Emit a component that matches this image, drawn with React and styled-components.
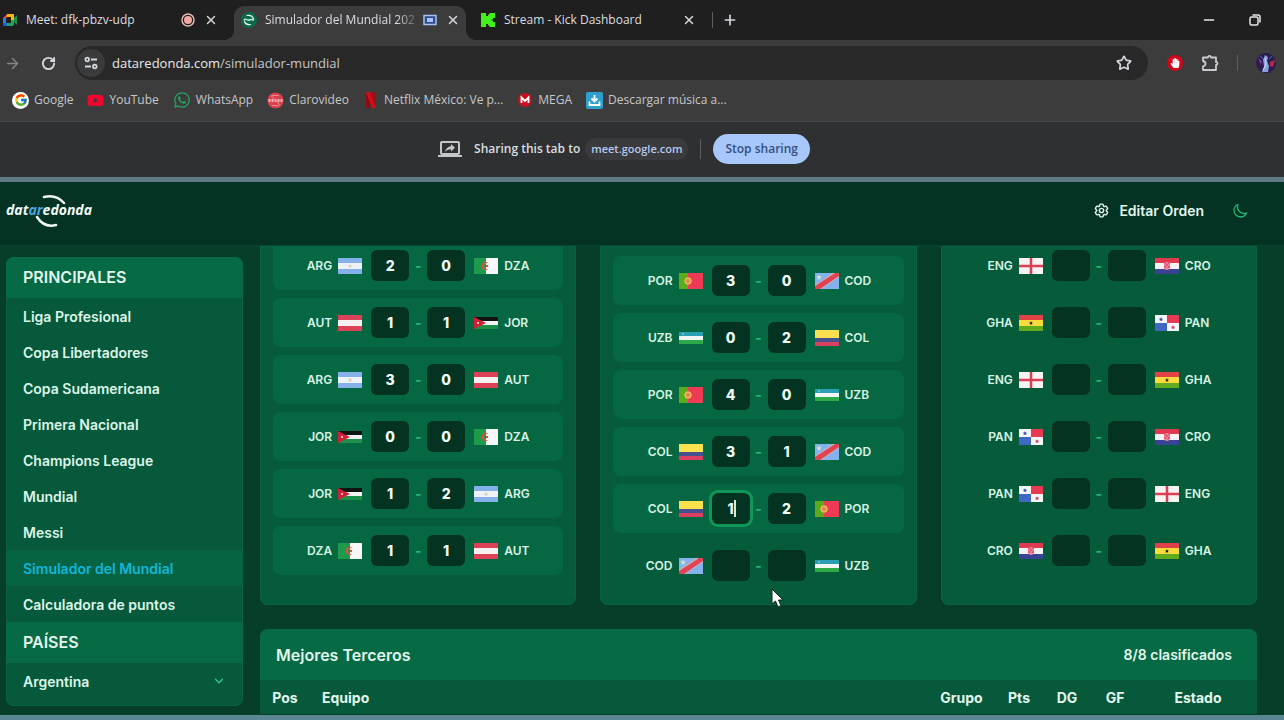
import { useState } from "react";

// Styled Components
import styled, { createGlobalStyle } from "styled-components";

// Icons
import { FcGoogle } from "react-icons/fc";
import { FaWhatsapp, FaYoutube, FaHandPaper } from "react-icons/fa";
import { HiOutlineCog6Tooth, HiOutlineMoon } from "react-icons/hi2";
import { MdOutlineScreenShare } from "react-icons/md";
import {
  ArrowRight,
  ChevronDown,
  Minus,
  Plus,
  RotateCw,
  Star,
  X,
} from "lucide-react";

const menu = [
  "Liga Profesional",
  "Copa Libertadores",
  "Copa Sudamericana",
  "Primera Nacional",
  "Champions League",
  "Mundial",
  "Messi",
  "Simulador del Mundial",
  "Calculadora de puntos",
];

// home, home goals, away goals, away
const groups = [
  {
    id: "J",
    offset: -5,
    matches: [
      ["ARG", "2", "0", "DZA"],
      ["AUT", "1", "1", "JOR"],
      ["ARG", "3", "0", "AUT"],
      ["JOR", "0", "0", "DZA"],
      ["JOR", "1", "2", "ARG"],
      ["DZA", "1", "1", "AUT"],
    ],
  },
  {
    id: "K",
    offset: 10,
    matches: [
      ["POR", "3", "0", "COD"],
      ["UZB", "0", "2", "COL"],
      ["POR", "4", "0", "UZB"],
      ["COL", "3", "1", "COD"],
      ["COL", "1", "2", "POR"],
      ["COD", "", "", "UZB"],
    ],
  },
  {
    id: "L",
    offset: -5,
    matches: [
      ["ENG", "", "", "CRO"],
      ["GHA", "", "", "PAN"],
      ["ENG", "", "", "GHA"],
      ["PAN", "", "", "CRO"],
      ["PAN", "", "", "ENG"],
      ["CRO", "", "", "GHA"],
    ],
  },
];

const flags = {
  ARG: (
    <>
      <rect width="24" height="16" fill="#86b0ea" />
      <rect y="5" width="24" height="6" fill="#eef2f6" />
      <circle cx="12" cy="8" r="1.6" fill="#d8d3b4" />
    </>
  ),
  DZA: (
    <>
      <rect width="12" height="16" fill="#1f9a4c" />
      <rect x="12" width="12" height="16" fill="#f7f7f7" />
      <path
        d="M14.5 5.2A4 4 0 1 0 14.5 10.8A3.2 3.2 0 1 1 14.5 5.2Z"
        fill="#d8523c"
      />
      <circle cx="13" cy="8" r="1.2" fill="#d8523c" />
    </>
  ),
  AUT: (
    <>
      <rect width="24" height="16" fill="#dc4257" />
      <rect y="5" width="24" height="6" fill="#f6f0f0" />
    </>
  ),
  JOR: (
    <>
      <rect y="2" width="24" height="4" fill="#101410" />
      <rect y="6" width="24" height="4" fill="#f2f2f2" />
      <rect y="10" width="24" height="4" fill="#1d8f49" />
      <path d="M0 2L12 8L0 14Z" fill="#cf2036" />
      <circle cx="4" cy="8" r="1" fill="#f2f2f2" />
    </>
  ),
  POR: (
    <>
      <rect width="9" height="16" fill="#5cab1c" />
      <rect x="9" width="15" height="16" fill="#ee3a55" />
      <circle cx="9" cy="8" r="3.2" fill="#e88a5c" stroke="#f3d54a" />
    </>
  ),
  COD: (
    <>
      <rect width="24" height="16" fill="#84b2ec" />
      <path d="M0 16V12L18 0H24V4L6 16Z" fill="#d9b8a8" />
      <path d="M0 16V13L20 0H24V3L5 16Z" fill="#df4355" />
      <path
        d="M4 1.5l.8 1.8 2 .2-1.5 1.3.5 2L4 5.800l-1.800 1 .5-2L1.200 3.500l2-.2z"
        fill="#d6e3c8"
      />
    </>
  ),
  UZB: (
    <>
      <rect y="2" width="24" height="4" fill="#2b9fb4" />
      <rect y="6" width="24" height="4" fill="#f2f6f4" />
      <rect y="10" width="24" height="4" fill="#2cab48" />
      <circle cx="4" cy="4" r="1" fill="#7cc6d2" />
    </>
  ),
  COL: (
    <>
      <rect width="24" height="8" fill="#fbe04f" />
      <rect y="8" width="24" height="4" fill="#46508f" />
      <rect y="12" width="24" height="4" fill="#dc4060" />
    </>
  ),
  ENG: (
    <>
      <rect width="24" height="16" fill="#f6f4f2" />
      <path d="M12 0V16M0 8H24" stroke="#de3d56" strokeWidth="2.500" />
    </>
  ),
  CRO: (
    <>
      <rect width="24" height="5" fill="#e03a50" />
      <rect y="5" width="24" height="6" fill="#f4f1f3" />
      <rect y="11" width="24" height="5" fill="#3a4393" />
      <path d="M9 4H15V9Q15 12 12 12Q9 12 9 9Z" fill="#ee7f92" />
      <path
        d="M9 4h2v2H9zM13 4h2v2h-2zM11 6h2v2h-2zM9 8h2v2H9zM13 8h2v2h-2z"
        fill="#e5576c"
      />
    </>
  ),
  GHA: (
    <>
      <rect width="24" height="5" fill="#e04248" />
      <rect y="5" width="24" height="6" fill="#fadb3c" />
      <rect y="11" width="24" height="5" fill="#62ab1e" />
      <path
        d="M12 6l.6 1.500h1.500l-1.200 1 .4 1.500-1.300-.9-1.300.9.4-1.500-1.200-1h1.500z"
        fill="#1c1c14"
      />
    </>
  ),
  PAN: (
    <>
      <rect width="24" height="16" fill="#f4f5f8" />
      <rect x="12" width="12" height="8" fill="#e83a52" />
      <rect y="8" width="12" height="8" fill="#3f68c4" />
      <path
        d="M6 2.200l.7 1.300 1.400.2-1 1 .2 1.400L6 5.400l-1.300.7.2-1.400-1-1 1.400-.2z"
        fill="#3f4f9c"
      />
      <path
        d="M18 10.200l.7 1.300 1.400.2-1 1 .2 1.400-1.300-.7-1.300.7.2-1.400-1-1 1.400-.2z"
        fill="#d5405a"
      />
    </>
  ),
};

const Flag = ({ code }) => (
  <FlagSvg viewBox="0 0 24 16" aria-hidden="true">
    {flags[code]}
  </FlagSvg>
);

const Match = ({ match, active }) => {
  const [home, homeGoals, awayGoals, away] = match;
  const [score, setScore] = useState([homeGoals, awayGoals]);

  return (
    <MatchRow $played={homeGoals !== ""}>
      <Team $home>
        <span>{home}</span>
        <Flag code={home} />
      </Team>
      <ScoreBox>
        <Score
          aria-label={`Goles ${home}`}
          inputMode="numeric"
          value={score[0]}
          $active={active}
          onChange={(e) => setScore([e.target.value, score[1]])}
        />
        {active && <Caret />}
      </ScoreBox>
      <Dash>-</Dash>
      <ScoreBox>
        <Score
          aria-label={`Goles ${away}`}
          inputMode="numeric"
          value={score[1]}
          onChange={(e) => setScore([score[0], e.target.value])}
        />
      </ScoreBox>
      <Team>
        <Flag code={away} />
        <span>{away}</span>
      </Team>
    </MatchRow>
  );
};

// Browser icons
const MeetIcon = () => (
  <svg width="16" height="16" viewBox="0 0 16 16" aria-hidden="true">
    <path d="M1 6L5 2V6Z" fill="#e8453c" />
    <path d="M5 2H11V5H5Z" fill="#fbbc04" />
    <path d="M1 6H4V11H1Z" fill="#2f7de8" />
    <path d="M1 11H5V14H2Q1 14 1 13Z" fill="#1a67d2" />
    <path d="M5 11H9V14H5Z" fill="#22a85a" />
    <path d="M9 7L12 5V12Q12 14 10 14H8V11H9Z" fill="#22a85a" />
    <path d="M11 2Q12 2 12 3V8H9V5Z" fill="#fbbc04" />
    <path d="M12 6L15 3V13L12 10Z" fill="#15934a" />
  </svg>
);

const RecordIcon = () => (
  <svg width="14" height="14" viewBox="0 0 14 14" aria-hidden="true">
    <circle
      cx="7"
      cy="7"
      r="6"
      fill="none"
      stroke="#e5b9b4"
      strokeWidth="1.500"
    />
    <circle cx="7" cy="7" r="4" fill="#f0a8a2" />
  </svg>
);

const DataIcon = () => (
  <svg width="16" height="16" viewBox="0 0 16 16" aria-hidden="true">
    <circle cx="8" cy="8" r="8" fill="#0b6a4a" />
    <path
      d="M6 3.500Q11 2.500 12.500 7M3.500 9.500Q5 13.500 9.500 12.500"
      fill="none"
      stroke="#e9f6f0"
      strokeWidth="1.200"
      strokeLinecap="round"
    />
    <path
      d="M3 8.500Q4 6.500 5.500 7.500T8 8T10 7.500T13 8"
      fill="none"
      stroke="#c8eadb"
      strokeWidth="1.500"
    />
  </svg>
);

const CastIcon = () => (
  <svg width="14" height="12" viewBox="0 0 14 12" aria-hidden="true">
    <rect
      x="1"
      y="1.500"
      width="12"
      height="9"
      fill="#2f4a86"
      stroke="#a8c0f4"
      strokeWidth="1.500"
    />
    <rect x="4" y="4" width="6" height="4" fill="#a8c0f4" />
  </svg>
);

const KickIcon = () => (
  <svg width="16" height="16" viewBox="-1 -1 16 16" aria-hidden="true">
    <path
      d="M0 0H5V3H7V1.500H8.500V0H14V5H12V6.500H10.500V7.500H12V9H14V14H8.500V12.500H7V11H5V14H0Z"
      fill="#42f01c"
    />
  </svg>
);

const TuneIcon = () => (
  <svg
    width="16"
    height="16"
    viewBox="0 0 16 16"
    fill="none"
    stroke="#d5d7d9"
    strokeWidth="1.800"
    aria-hidden="true"
  >
    <circle cx="4.200" cy="4.500" r="1.800" />
    <path d="M8 4.500H14M2 11.500H8" />
    <circle cx="11.800" cy="11.500" r="1.800" />
  </svg>
);

const PuzzleIcon = () => (
  <svg
    width="18"
    height="18"
    viewBox="0 0 18 18"
    fill="none"
    stroke="#c9cbcd"
    strokeWidth="1.800"
    strokeLinejoin="round"
    aria-hidden="true"
  >
    <path d="M2 3.500H7Q7 1.800 8.500 1.800T10 3.500H15V8Q16.500 8 16.500 9.500T15 11V16H2V12.500Q4.500 12 4.500 9.800T2 7Z" />
  </svg>
);

const RestoreIcon = () => (
  <svg
    width="12"
    height="12"
    viewBox="0 0 12 12"
    fill="none"
    stroke="#e6e6e6"
    strokeWidth="1.500"
    aria-hidden="true"
  >
    <rect x="1" y="3" width="8" height="8" rx="1.500" />
    <path d="M3.500 1H9Q11 1 11 3V8.500" />
  </svg>
);

const AvatarIcon = () => (
  <svg width="20" height="20" viewBox="0 0 20 20" aria-hidden="true">
    <circle cx="10" cy="10" r="10" fill="#2c1c4e" />
    <path d="M2 5L6 8L5 12Z" fill="#7a3ba0" />
    <path d="M14 9L19 7L17 14L14 13Z" fill="#b3284f" />
    <path d="M9 2L12 4L11 8L13 13L12 19H6L8 13L7 7Z" fill="#8aa0dc" />
    <path d="M9 5L10 9L9 14L7 17" fill="none" stroke="#d5dcf6" />
    <path d="M4 3L7 6M13 6L16 3" stroke="#5b63c4" />
  </svg>
);

const ClaroIcon = () => (
  <svg width="17" height="17" viewBox="0 0 17 17" aria-hidden="true">
    <circle cx="8.500" cy="8.500" r="8" fill="#d8404e" />
    <path
      d="M1.500 8.500H15.500"
      stroke="#eeb4ba"
      strokeWidth="3"
      strokeDasharray="2 1"
    />
    <path d="M4 3.500L13 13M5 13.500H12M5 3.500H12" stroke="#ea8a92" />
  </svg>
);

const NetflixIcon = () => (
  <svg width="16" height="16" viewBox="0 0 16 16" aria-hidden="true">
    <rect x="3" width="4" height="16" fill="#8f0a12" />
    <rect x="9" width="4" height="16" fill="#a50b14" />
    <path d="M3 0H7L13 16H9Z" fill="#d40c18" />
  </svg>
);

const MegaIcon = () => (
  <svg width="16" height="16" viewBox="0 0 16 16" aria-hidden="true">
    <circle cx="8" cy="8" r="7" fill="#c90f22" />
    <path
      d="M4.500 11V5.500L8 9L11.500 5.500V11"
      fill="none"
      stroke="#fff"
      strokeWidth="1.800"
    />
  </svg>
);

const DownloadIcon = () => (
  <svg width="17" height="17" viewBox="0 0 17 17" aria-hidden="true">
    <rect width="17" height="17" rx="2" fill="#2f9fce" />
    <path
      d="M8.500 3V9M5.500 6.500L8.500 9.500L11.500 6.500M3.500 9.500V13H13.500V9.500"
      fill="none"
      stroke="#fff"
      strokeWidth="1.800"
    />
  </svg>
);

const GoogleIcon = () => (
  <Badge>
    <FcGoogle size={14} />
  </Badge>
);

const bookmarks = [
  { label: "Google", icon: <GoogleIcon /> },
  { label: "YouTube", icon: <FaYoutube size={17} color="#f0062f" /> },
  { label: "WhatsApp", icon: <FaWhatsapp size={18} color="#24a35a" /> },
  { label: "Clarovideo", icon: <ClaroIcon /> },
  { label: "Netflix México: Ve p...", icon: <NetflixIcon /> },
  { label: "MEGA", icon: <MegaIcon /> },
  { label: "Descargar música a...", icon: <DownloadIcon /> },
];

const CloseTab = () => (
  <IconButton aria-label="Cerrar pestaña">
    <X size={14} strokeWidth={2.5} />
  </IconButton>
);

const Browser = () => (
  <>
    <TabStrip>
      <Tab>
        <MeetIcon />
        <TabTitle>Meet: dfk-pbzv-udp</TabTitle>
        <RecordIcon />
        <CloseTab />
      </Tab>
      <Tab $active>
        <DataIcon />
        <TabTitle $fade>Simulador del Mundial 202</TabTitle>
        <CastIcon />
        <CloseTab />
      </Tab>
      <Tab>
        <KickIcon />
        <TabTitle>Stream - Kick Dashboard</TabTitle>
        <CloseTab />
      </Tab>
      <Separator />
      <NewTab aria-label="Nueva pestaña">
        <Plus size={16} strokeWidth={2.5} />
      </NewTab>
      <WindowControls>
        <button aria-label="Minimizar">
          <Minus size={16} />
        </button>
        <button aria-label="Restaurar">
          <RestoreIcon />
        </button>
      </WindowControls>
    </TabStrip>

    <Toolbar>
      <IconButton aria-label="Adelante" $muted>
        <ArrowRight size={17} />
      </IconButton>
      <IconButton aria-label="Recargar">
        <RotateCw size={15} strokeWidth={3} />
      </IconButton>
      <Omnibox>
        <SiteInfo aria-label="Información del sitio">
          <TuneIcon />
        </SiteInfo>
        <Url>
          <b>dataredonda.com</b>/simulador-mundial
        </Url>
        <IconButton aria-label="Favorito">
          <Star size={16} strokeWidth={2.5} />
        </IconButton>
      </Omnibox>
      <Extensions>
        <AdBlock aria-label="AdBlock">
          <FaHandPaper size={10} />
        </AdBlock>
        <IconButton aria-label="Extensiones">
          <PuzzleIcon />
        </IconButton>
        <Separator />
        <IconButton aria-label="Perfil">
          <AvatarIcon />
        </IconButton>
      </Extensions>
    </Toolbar>

    <Bookmarks>
      {bookmarks.map(({ label, icon }) => (
        <a href="#" key={label}>
          {icon}
          {label}
        </a>
      ))}
    </Bookmarks>

    <ShareBar>
      <MdOutlineScreenShare size={24} />
      <span>Sharing this tab to</span>
      <ShareHost>meet.google.com</ShareHost>
      <ShareDivider />
      <StopButton>Stop sharing</StopButton>
    </ShareBar>
  </>
);

const Logo = () => (
  <svg
    width="90"
    height="34"
    viewBox="0 0 90 34"
    role="img"
    aria-label="dataredonda"
  >
    <path
      d="M38 3Q50 0 58 9"
      fill="none"
      stroke="#eef8f3"
      strokeWidth="2.500"
      strokeLinecap="round"
    />
    <path
      d="M31 23Q38 34 50 31"
      fill="none"
      stroke="#eef8f3"
      strokeWidth="2.500"
      strokeLinecap="round"
    />
    <text
      x="0"
      y="21"
      fontFamily="Open Sans, sans-serif"
      fontSize="14"
      fontWeight="700"
      fontStyle="italic"
      fill="#f2faf6"
    >
      dat<tspan fill="#4aa3df">ar</tspan>edonda
    </text>
  </svg>
);

const App = () => {
  return (
    <Wrapper>
      <GlobalStyle />
      <Browser />

      <Frame>
        <Header>
          <a href="#" aria-label="Inicio">
            <Logo />
          </a>
          <HeaderActions>
            <HeaderButton>
              <HiOutlineCog6Tooth size={17} strokeWidth={2} />
              Editar Orden
            </HeaderButton>
            <HeaderButton aria-label="Modo oscuro" $green>
              <HiOutlineMoon size={16} strokeWidth={2} />
            </HeaderButton>
          </HeaderActions>
        </Header>

        <Content>
          <Sidebar>
            <h2>PRINCIPALES</h2>
            {menu.map((item) => (
              <MenuItem
                href="#"
                key={item}
                $active={item === "Simulador del Mundial"}
              >
                {item}
              </MenuItem>
            ))}
            <h2>PAÍSES</h2>
            <MenuItem as="button">
              Argentina
              <ChevronDown size={14} strokeWidth={2.5} color="#2fc187" />
            </MenuItem>
          </Sidebar>

          <Main>
            <Groups>
              {groups.map(({ id, offset, matches }) => (
                <Group key={id} $offset={offset}>
                  {matches.map((match, i) => (
                    <Match
                      key={i}
                      match={match}
                      active={id === "K" && i === 4}
                    />
                  ))}
                </Group>
              ))}
            </Groups>

            <Thirds>
              <ThirdsHeader>
                <h2>Mejores Terceros</h2>
                <span>8/8 clasificados</span>
              </ThirdsHeader>
              <Table>
                <thead>
                  <tr>
                    <Th $width="50px">Pos</Th>
                    <Th $left>Equipo</Th>
                    <Th $width="67px">Grupo</Th>
                    <Th $width="48px">Pts</Th>
                    <Th $width="48px">DG</Th>
                    <Th $width="48px">GF</Th>
                    <Th $width="118px">Estado</Th>
                  </tr>
                </thead>
              </Table>
            </Thirds>
          </Main>
        </Content>
      </Frame>

      <Pointer width="14" height="20" viewBox="0 0 14 20" aria-hidden="true">
        <path
          d="M1 1V16L4.500 13L7 19L10 17.500L7.500 12H12Z"
          fill="#fff"
          stroke="#0a2a1c"
        />
      </Pointer>
    </Wrapper>
  );
};

export default App;

const GlobalStyle = createGlobalStyle`
  * {
    box-sizing: border-box;
  }

  body {
    margin: 0;
    background-color: #063e2a;
  }

  button, input {
    font: inherit;
    color: inherit;
    border: none;
    background: none;
    padding: 0;
    outline: none;
  }

  button {
    cursor: pointer;
  }

  a {
    color: inherit;
    text-decoration: none;
  }

  h2 {
    margin: 0;
  }

  svg {
    display: block;
    flex-shrink: 0;
  }
`;

const Wrapper = styled.div`
  display: flex;
  flex-direction: column;
  height: 100vh;
  overflow: hidden;

  font-family: "Open Sans", "Noto Sans", sans-serif;
  font-size: 12px;
  color: #dcdee0;
`;

const TabStrip = styled.div`
  display: flex;
  align-items: center;
  height: 40px;
  padding-right: 6px;
  margin-left: -5px;
  background-color: #1f1f1f;
  flex-shrink: 0;
`;

const Tab = styled.div`
  position: relative;
  display: flex;
  align-items: center;
  gap: 8px;
  align-self: flex-end;

  width: 232px;
  height: 34px;
  margin-right: 7px;
  padding: 0 8px 6px 7px;
  border-radius: 10px 10px 0 0;
  background-color: ${({ $active }) => ($active ? "#3c3c3c" : "transparent")};

  // curved feet of the selected tab
  &::before,
  &::after {
    content: "";
    display: ${({ $active }) => ($active ? "block" : "none")};
    position: absolute;
    bottom: 0;
    width: 10px;
    height: 10px;
  }

  &::before {
    left: -10px;
    background: radial-gradient(circle at 0 0, transparent 10px, #3c3c3c 10px);
  }

  &::after {
    right: -10px;
    background: radial-gradient(
      circle at 100% 0,
      transparent 10px,
      #3c3c3c 10px
    );
  }
`;

const TabTitle = styled.span`
  flex: 1;
  white-space: nowrap;
  line-height: 18px;
  mask-image: ${({ $fade }) =>
    $fade ? "linear-gradient(to right, #000 88%, transparent 104%)" : "none"};
`;

const IconButton = styled.button`
  display: flex;
  align-items: center;
  justify-content: center;
  min-width: 16px;
  height: 20px;
  color: ${({ $muted }) => ($muted ? "#858789" : "#d5d7d9")};
`;

const NewTab = styled(IconButton)`
  margin-left: 9px;
`;

const Separator = styled.span`
  width: 1px;
  height: 16px;
  background-color: #5c5e60;
`;

const WindowControls = styled.div`
  display: flex;
  margin-left: auto;
  color: #e6e6e6;

  button {
    display: flex;
    align-items: center;
    justify-content: center;
    width: 46px;
    height: 40px;
  }
`;

const Toolbar = styled.div`
  display: flex;
  align-items: center;
  height: 46px;
  padding: 0 8px 0 4px;
  gap: 19px;
  background-color: #3c3c3c;
  flex-shrink: 0;
`;

const Omnibox = styled.div`
  flex: 1;
  display: flex;
  align-items: center;
  gap: 7px;

  height: 34px;
  padding: 0 16px 0 2px;
  border-radius: 17px;
  background-color: #282828;
`;

const SiteInfo = styled.button`
  display: flex;
  align-items: center;
  justify-content: center;
  width: 28px;
  height: 28px;
  border-radius: 50%;
  background-color: #3a3b3b;
`;

const Url = styled.div`
  flex: 1;
  font-size: 13px;
  color: #c4c6c8;

  b {
    font-weight: 400;
    color: #e8eaec;
  }
`;

const Extensions = styled.div`
  display: flex;
  align-items: center;
  gap: 18px;
`;

const AdBlock = styled.button`
  display: flex;
  align-items: center;
  justify-content: center;
  width: 16px;
  height: 16px;
  border-radius: 50%;
  color: #fff;
  background-color: #d0061c;
`;

const Bookmarks = styled.nav`
  display: flex;
  align-items: center;
  gap: 14px;
  height: 35px;
  padding: 0 12px 7px;
  background-color: #3c3c3c;
  flex-shrink: 0;

  line-height: 18px;
  color: #c6c8ca;

  a {
    display: flex;
    align-items: center;
    gap: 5px;
    white-space: nowrap;
  }
`;

const Badge = styled.span`
  display: flex;
  align-items: center;
  justify-content: center;
  width: 17px;
  height: 17px;
  border-radius: 50%;
  background-color: #fff;
`;

const ShareBar = styled.div`
  display: flex;
  align-items: center;
  justify-content: center;
  height: 56px;
  padding: 0 36px 2px 0;
  background-color: #2e3031;
  border-top: 1px solid #454748;
  flex-shrink: 0;

  font-weight: 600;

  > svg {
    margin-right: 12px;
    color: #c4c6c8;
  }
`;

const ShareHost = styled.span`
  margin-left: 5px;
  padding: 0 6px;
  border-radius: 11px;
  font-size: 11px;
  line-height: 22px;
  color: #b7c9f2;
  background-color: #393b3c;
`;

const ShareDivider = styled.span`
  width: 1px;
  height: 20px;
  margin: 0 12px;
  background-color: #5c5e60;
`;

const StopButton = styled.button`
  height: 30px;
  padding: 0 12px;
  border-radius: 15px;
  font-size: 12px;
  font-weight: 600;
  color: #35507f;
  background-color: #a8c7fa;
`;

const Frame = styled.div`
  flex: 1;
  display: flex;
  flex-direction: column;
  min-height: 0;
  border-top: 5px solid #5e7a84;
  border-bottom: 5px solid #5b8794;

  font-family: Inter, "Liberation Sans", sans-serif;
  color: #e2f6ec;
  background-color: #063e2a;
`;

const Header = styled.header`
  display: flex;
  align-items: center;
  justify-content: space-between;
  height: 64px;
  padding: 0 36px 6px 6px;
  background-color: #043324;
  border-bottom: 1px solid #07472f;
  flex-shrink: 0;
`;

const HeaderActions = styled.div`
  display: flex;
  align-items: center;
  gap: 28px;
`;

const HeaderButton = styled.button`
  display: flex;
  align-items: center;
  gap: 9px;
  font-size: 14px;
  font-weight: 600;
  color: ${({ $green }) => ($green ? "#22b573" : "#e2f6ec")};
`;

const Content = styled.div`
  flex: 1;
  display: flex;
  align-items: flex-start;
  gap: 17px;
  min-height: 0;
  padding: 0 27px 0 6px;
  overflow: hidden;
`;

const Sidebar = styled.nav`
  display: flex;
  flex-direction: column;
  width: 237px;
  margin-top: 11px;
  padding-bottom: 7px;
  border-radius: 8px;
  overflow: hidden;
  background-color: #06593a;
  box-shadow: inset 0 0 0 1px #0a6443;
  flex-shrink: 0;

  h2 {
    padding: 0 17px;
    font-size: 16px;
    font-weight: 600;
    line-height: 41px;
    background-color: #066a45;
  }
`;

const MenuItem = styled.a`
  display: flex;
  align-items: center;
  justify-content: space-between;
  height: 36px;
  padding: 0 17px;
  font-size: 14px;
  font-weight: 600;
  color: ${({ $active }) => ($active ? "#12b5d8" : "#dcf5e8")};
  background-color: ${({ $active }) => ($active ? "#066443" : "transparent")};
`;

const Main = styled.main`
  flex: 1;
  display: flex;
  flex-direction: column;
  gap: 24px;
  min-width: 0;
`;

const Groups = styled.div`
  display: grid;
  grid-template-columns: repeat(3, minmax(0, 1fr));
  gap: 24px;
`;

const Group = styled.section`
  display: flex;
  flex-direction: column;
  gap: 8px;
  padding: 0 13px 15px;
  border-radius: 0 0 8px 8px;
  overflow: hidden;
  background-color: #065b3b;
  box-shadow: inset 0 0 0 1px #086341;

  > :first-child {
    margin-top: ${({ $offset }) => $offset}px;
  }
`;

const MatchRow = styled.div`
  display: flex;
  align-items: center;
  justify-content: center;
  height: 49px;
  border-radius: 8px;
  background-color: ${({ $played }) => ($played ? "#066843" : "transparent")};
`;

const Team = styled.div`
  flex: 1;
  display: flex;
  align-items: center;
  gap: 6px;
  justify-content: ${({ $home }) => ($home ? "flex-end" : "flex-start")};
  padding: 0 9px;
  font-size: 12px;
  font-weight: 600;
  color: #d8f3e5;
`;

const FlagSvg = styled.svg`
  width: 24px;
  height: 16px;
`;

const ScoreBox = styled.div`
  position: relative;
  width: 38px;
`;

const Score = styled.input`
  display: block;
  width: 100%;
  height: 31px;
  border-radius: 6px;
  text-align: center;
  font-size: 14px;
  font-weight: 800;
  color: #f1fbf6;
  background-color: #043322;
  box-shadow: ${({ $active }) => ($active ? "0 0 0 3px #11965a" : "none")};
`;

const Caret = styled.span`
  position: absolute;
  top: 7px;
  left: 22px;
  width: 2px;
  height: 17px;
  background-color: #d5e6dd;
`;

const Dash = styled.span`
  width: 18px;
  text-align: center;
  font-size: 14px;
  font-weight: 700;
  color: #22b67c;
`;

const Thirds = styled.section`
  border-radius: 8px 8px 0 0;
  overflow: hidden;
  background-color: #06593a;
`;

const ThirdsHeader = styled.div`
  display: flex;
  align-items: center;
  justify-content: space-between;
  height: 51px;
  padding: 0 25px 0 16px;
  background-color: #066a45;

  h2 {
    font-size: 16px;
    font-weight: 600;
  }

  span {
    font-size: 14px;
    font-weight: 600;
  }
`;

const Table = styled.table`
  width: 100%;
  table-layout: fixed;
  border-collapse: collapse;
`;

const Th = styled.th`
  width: ${({ $width }) => $width || "auto"};
  height: 34px;
  padding: 0 ${({ $left }) => ($left ? "12px" : "0")};
  text-align: ${({ $left }) => ($left ? "left" : "center")};
  font-size: 14px;
  font-weight: 700;
`;

const Pointer = styled.svg`
  position: absolute;
  top: 588px;
  left: 771px;
`;
